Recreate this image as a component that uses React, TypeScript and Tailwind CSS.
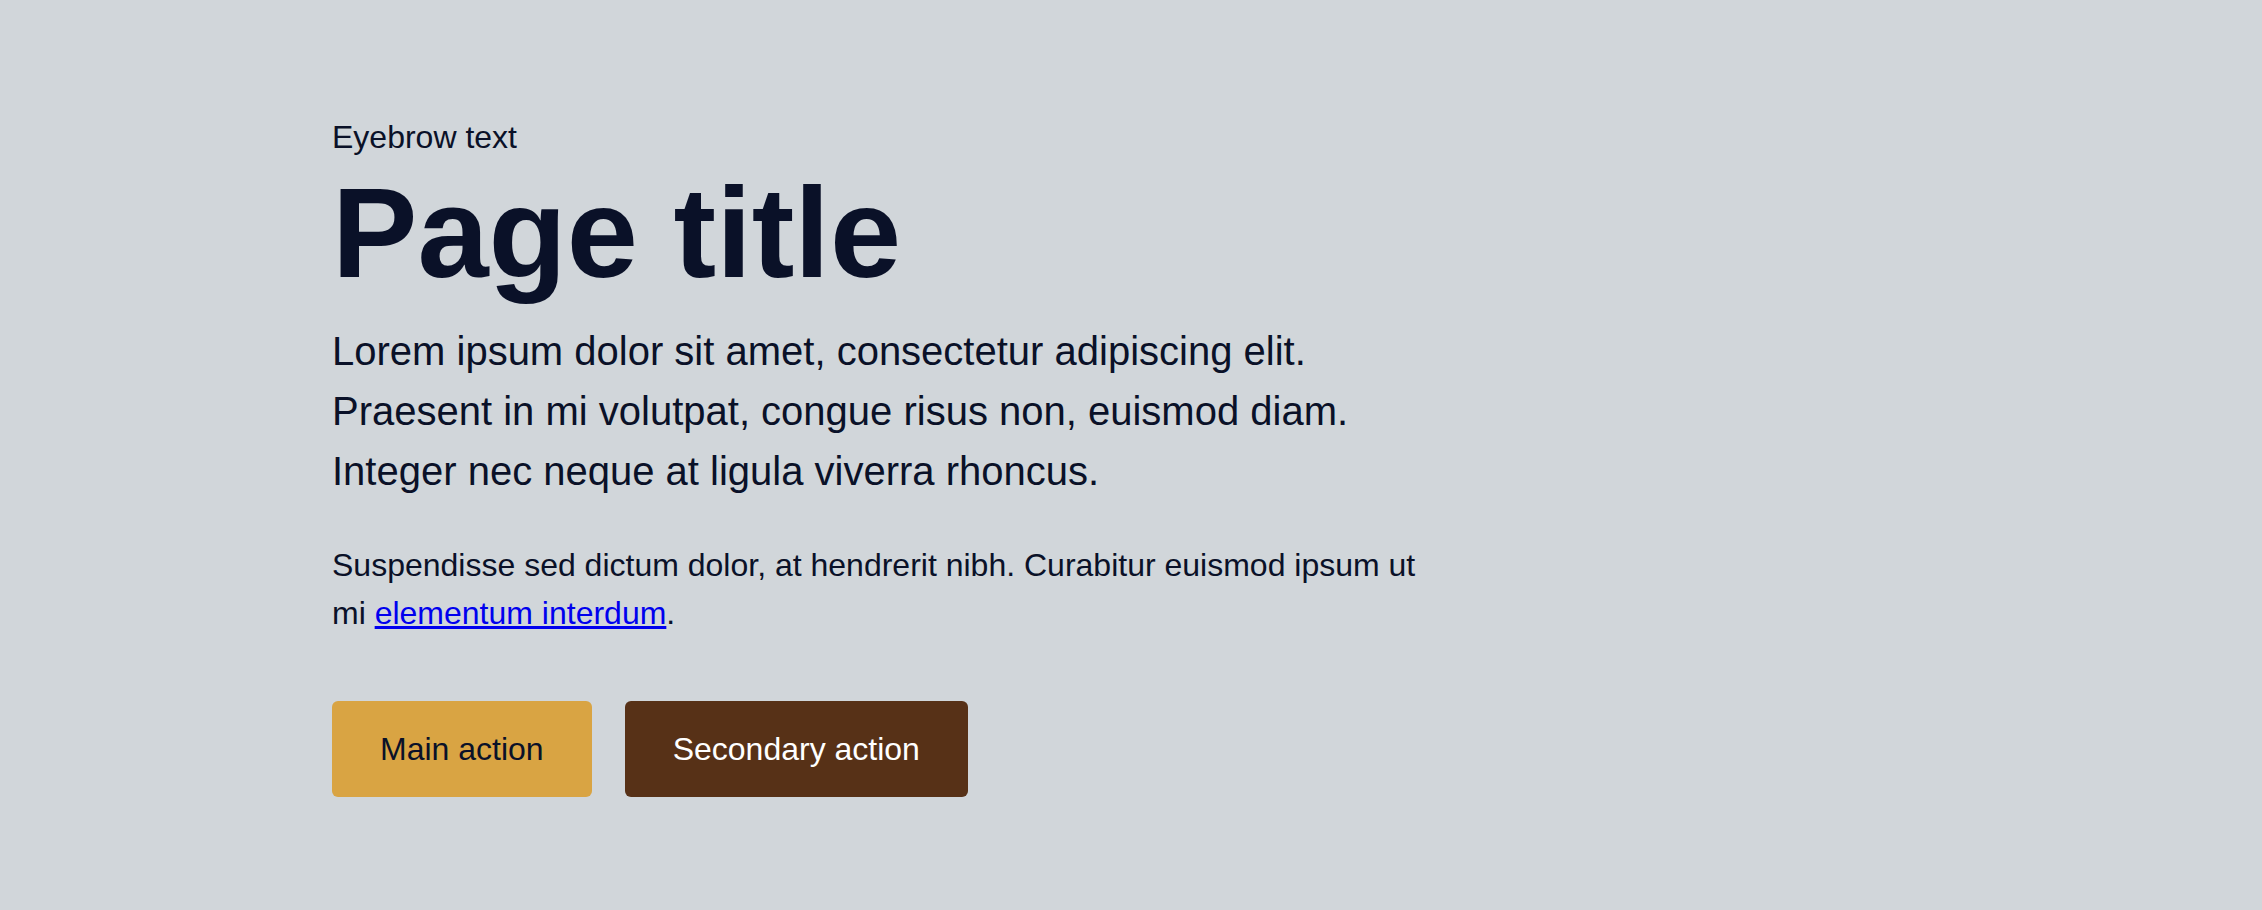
import React from 'react';

const Hero = () => {
  return (
    <section className="min-h-screen w-full bg-[#d1d6da] text-[#0a1128] font-['Liberation_Sans',Arial,sans-serif]">
      <div className="pl-[332px] pt-[113px] pb-16">
        {/* Heading */}
        <p className="text-[32px] leading-[48px]">Eyebrow text</p>
        <h1 className="mt-2 text-[128px] leading-[128px] font-bold">Page title</h1>

        {/* Copy */}
        <p className="mt-6 max-w-[1100px] text-[40px] leading-[60px]">
          Lorem ipsum dolor sit amet, consectetur adipiscing elit. Praesent in mi volutpat, congue risus non, euismod
          diam. Integer nec neque at ligula viverra rhoncus.
        </p>
        <p className="mt-10 max-w-[1100px] text-[32px] leading-[48px]">
          Suspendisse sed dictum dolor, at hendrerit nibh. Curabitur euismod ipsum ut mi{' '}
          <a href="#" className="text-[#0000ee] underline">
            elementum interdum
          </a>
          .
        </p>

        {/* Actions */}
        <div className="mt-[64px] flex items-center gap-[33px]">
          <button className="h-[96px] rounded-md bg-[#d9a443] px-12 text-[32px] leading-[48px] text-[#0a1128]">
            Main action
          </button>
          <button className="h-[96px] rounded-md bg-[#573117] px-12 text-[32px] leading-[48px] text-white">
            Secondary action
          </button>
        </div>
      </div>
    </section>
  );
};

export default function App() {
  return <Hero />;
}
